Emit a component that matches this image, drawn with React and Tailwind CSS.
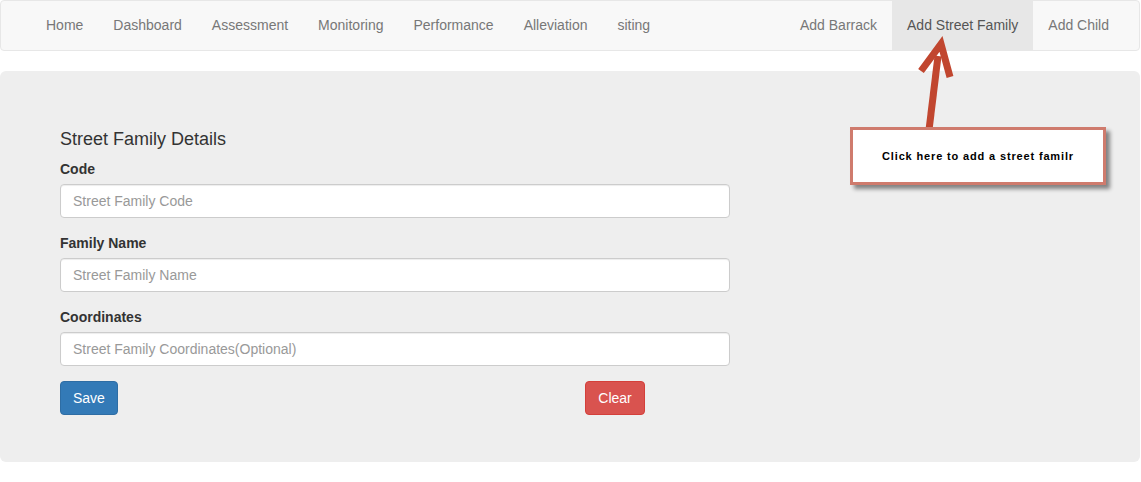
import React from "react";

const leftLinks = ["Home", "Dashboard", "Assessment", "Monitoring", "Performance", "Alleviation", "siting"];
const rightLinks = ["Add Barrack", "Add Street Family", "Add Child"];

const Field = ({ label, placeholder }) => (
  <div className="mb-[15px]">
    <label className="block text-[14px] leading-[20px] font-bold text-[#333] mb-[5px]">{label}</label>
    <input
      type="text"
      placeholder={placeholder}
      className="block w-[670px] h-[34px] px-[12px] py-[6px] text-[14px] text-[#555] bg-white border border-[#ccc] rounded-[4px] shadow-[inset_0_1px_1px_rgba(0,0,0,0.075)] placeholder:text-[#999] outline-none"
    />
  </div>
);

const App = () => {
  return (
    <div className="relative w-[1141px] h-[482px] bg-white font-['Liberation_Sans',Arial,sans-serif] text-[14px] text-[#333]">
      {/* navbar */}
      <nav className="flex justify-between h-[51px] bg-[#f8f8f8] border border-[#e7e7e7] rounded-[4px] w-[1140px]">
        <ul className="flex pl-[30px]">
          {leftLinks.map((l) => (
            <li key={l} className="px-[15px] leading-[49px] text-[#777]">{l}</li>
          ))}
        </ul>
        <ul className="flex pr-[15px]">
          {rightLinks.map((l) => (
            <li
              key={l}
              className={`px-[15px] leading-[49px] ${l === "Add Street Family" ? "bg-[#e7e7e7] text-[#555]" : "text-[#777]"}`}
            >
              {l}
            </li>
          ))}
        </ul>
      </nav>

      {/* jumbotron */}
      <div className="mt-[20px] w-[1140px] bg-[#eee] rounded-[6px] px-[60px] pt-[48px] pb-[47px]">
        <h4 className="text-[18px] leading-[20px] mt-[10px] mb-[10px] text-[#333]">Street Family Details</h4>
        <Field label="Code" placeholder="Street Family Code" />
        <Field label="Family Name" placeholder="Street Family Name" />
        <Field label="Coordinates" placeholder="Street Family Coordinates(Optional)" />
        <div className="flex justify-between w-[585px]">
          <button className="h-[34px] px-[12px] text-[14px] text-white bg-[#337ab7] border border-[#2e6da4] rounded-[4px]">Save</button>
          <button className="h-[34px] px-[12px] min-w-[60px] text-[14px] text-white bg-[#d9534f] border border-[#d43f3a] rounded-[4px]">Clear</button>
        </div>
      </div>

      {/* callout annotation */}
      <svg className="absolute left-[905px] top-[30px]" width="60" height="100" viewBox="905 30 60 100">
        <line x1="929" y1="130" x2="938" y2="56" stroke="#c1462f" strokeWidth="7" />
        <polyline points="921,71 941,44 950,77" fill="none" stroke="#c1462f" strokeWidth="7" strokeLinejoin="miter" />
      </svg>
      <div className="absolute left-[850px] top-[127px] w-[256px] h-[58px] bg-white border-[3px] border-[#cf7b6d] shadow-[4px_4px_4px_rgba(0,0,0,0.45)] flex items-center justify-center">
        <span className="text-[11px] font-bold text-black tracking-[0.85px]">Click here to add a street familr</span>
      </div>
    </div>
  );
};

export default App;
